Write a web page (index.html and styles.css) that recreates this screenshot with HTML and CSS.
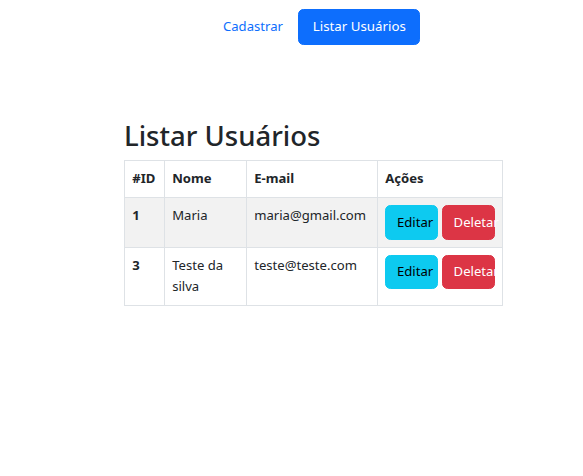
FILE: index.html
```html
<!DOCTYPE html>
<html lang="pt-BR">
<head>
<meta charset="utf-8">
<title>Listar Usuários</title>
<link rel="stylesheet" href="styles.css">
</head>
<body>
<nav class="nav">
  <a class="nav-link" href="#">Cadastrar</a>
  <a class="btn btn-primary btn-nav" href="#">Listar Usuários</a>
</nav>
<main class="content">
  <h1 class="title">Listar Usuários</h1>
  <table class="table">
    <colgroup>
      <col class="c-id"><col class="c-nome"><col class="c-email"><col class="c-acoes">
    </colgroup>
    <thead>
      <tr><th>#ID</th><th>Nome</th><th>E-mail</th><th>Ações</th></tr>
    </thead>
    <tbody>
      <tr class="striped">
        <th>1</th><td>Maria</td><td>maria@gmail.com</td>
        <td><div class="actions"><button class="btn btn-info">Editar</button><button class="btn btn-danger">Deletar</button></div></td>
      </tr>
      <tr>
        <th>3</th><td>Teste da silva</td><td>teste@teste.com</td>
        <td><div class="actions"><button class="btn btn-info">Editar</button><button class="btn btn-danger">Deletar</button></div></td>
      </tr>
    </tbody>
  </table>
</main>
</body>
</html>
```
FILE: styles.css
```css
html, body {
  margin: 0;
  padding: 0;
  background: #fff;
}
body {
  font-family: "Noto Sans", "Open Sans", sans-serif;
  font-size: 13.1px;
  line-height: 21.6px;
  color: #212529;
}
.nav {
  display: flex;
  align-items: center;
  padding: 9px 0 0 208.6px;
}
.nav-link {
  color: #0d6efd;
  text-decoration: none;
  padding: 0 15.4px 0 14.4px;
}
.btn {
  display: inline-block;
  font-family: inherit;
  font-size: 13.1px;
  line-height: 21.6px;
  padding: 5.4px 10.8px;
  border: 1px solid transparent;
  border-radius: 5.4px;
  text-decoration: none;
  text-align: left;
  white-space: nowrap;
  cursor: pointer;
}
.btn-nav {
  padding: 6px 13.5px;
  font-size: 13.3px;
}
.btn-primary {
  background: #0d6efd;
  border-color: #0d6efd;
  color: #fff;
}
.btn-info {
  background: #0dcaf0;
  border-color: #0dcaf0;
  color: #000;
}
.btn-danger {
  background: #dc3545;
  border-color: #dc3545;
  color: #fff;
}
.content {
  width: 378px;
  margin-left: 124px;
  padding-top: 73.4px;
}
.title {
  font-size: 27.5px;
  font-weight: 500;
  line-height: 36px;
  margin: 0 0 6px;
}
.table {
  width: 378px;
  table-layout: fixed;
  border-collapse: collapse;
  color: #212529;
}
.c-id { width: 40px; }
.c-nome { width: 82px; }
.c-email { width: 131px; }
.c-acoes { width: 125px; }
.table th,
.table td {
  border: 1px solid #dee2e6;
  padding: 7.2px;
  text-align: left;
  vertical-align: top;
}
.table th { font-weight: 700; }
.striped th,
.striped td { background: #f2f2f2; }
.actions {
  display: flex;
  gap: 3.6px;
}
.actions .btn {
  flex: 1 1 0;
  min-width: 0;
}
```
